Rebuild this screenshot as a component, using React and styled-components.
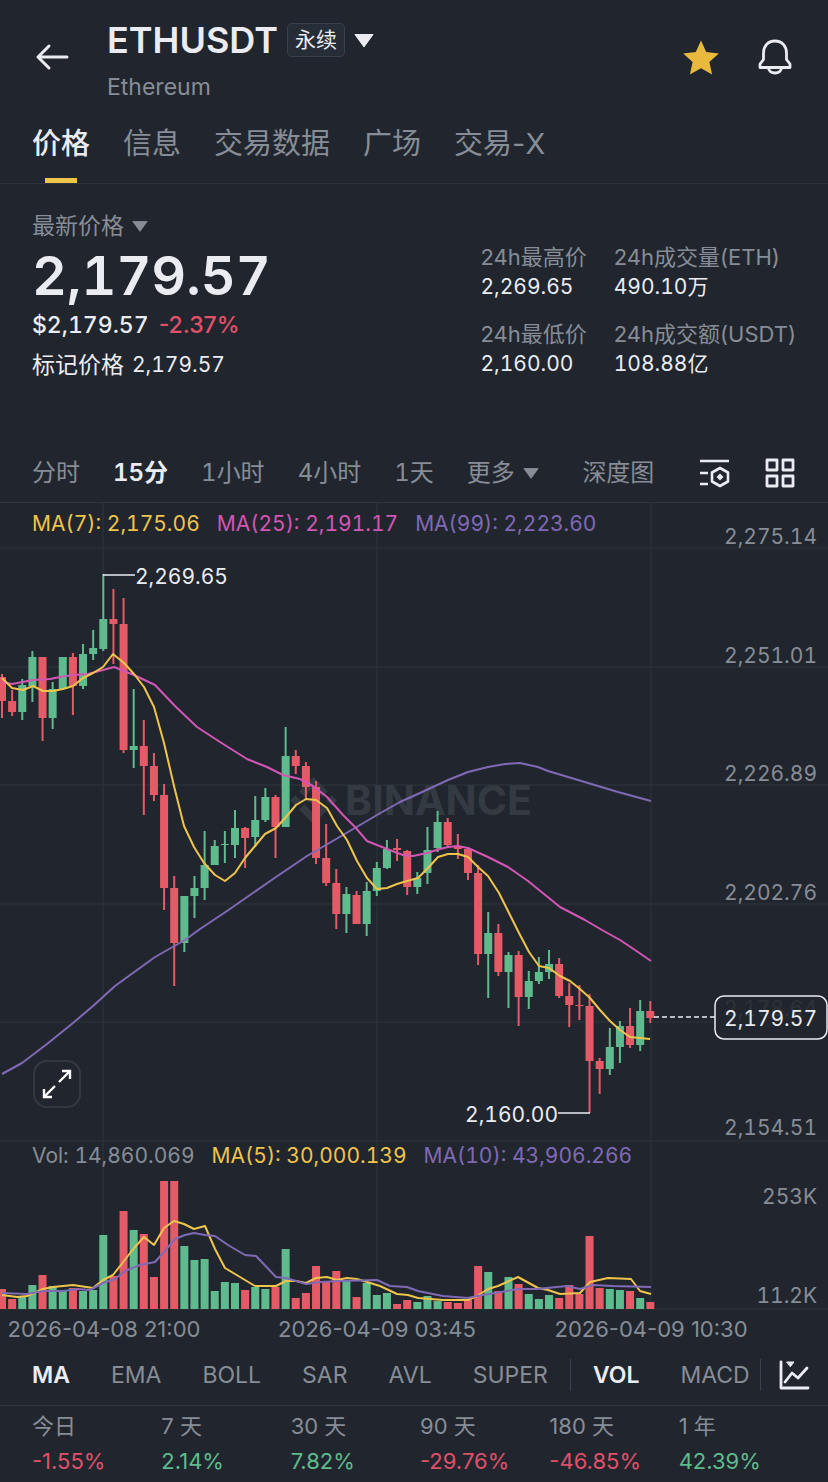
import React from "react";
import styled, { createGlobalStyle } from "styled-components";
import { SiBinance } from "react-icons/si";

const BG = "#21262e";
const WHITE = "#eaecf2";
const GRAY = "#878d96";
const LINE = "#2f353d";
const RED = "#e55a67";
const GREEN = "#5fbb8d";
const YELLOW = "#efc44b";
const PINK = "#d355b4";
const PURPLE = "#8069b5";

const tabs = ["价格", "信息", "交易数据", "广场", "交易-X"];
const periods = ["分时", "15分", "1小时", "4小时", "1天"];
const indicators = ["MA", "EMA", "BOLL", "SAR", "AVL", "SUPER"];
const subIndicators = ["VOL", "MACD"];

const stats = [
    { name: "24h最高价", value: "2,269.65" },
    { name: "24h成交量(ETH)", value: "490.10万" },
    { name: "24h最低价", value: "2,160.00" },
    { name: "24h成交额(USDT)", value: "108.88亿" },
];

const changes = [
    { name: "今日", value: "-1.55%" },
    { name: "7 天", value: "2.14%" },
    { name: "30 天", value: "7.82%" },
    { name: "90 天", value: "-29.76%" },
    { name: "180 天", value: "-46.85%" },
    { name: "1 年", value: "42.39%" },
];

const priceMa = [
    { text: "MA(7): 2,175.06", color: YELLOW },
    { text: "MA(25): 2,191.17", color: PINK },
    { text: "MA(99): 2,223.60", color: PURPLE },
];

const volumeMa = [
    { text: "Vol: 14,860.069", color: GRAY },
    { text: "MA(5): 30,000.139", color: YELLOW },
    { text: "MA(10): 43,906.266", color: PURPLE },
];

// [up, high, body top, body bottom, low, volume top] in chart coordinates
const candles = [
    [0, 674, 677, 701, 718, 1289], [0, 690, 701, 712, 716, 1299], [1, 679, 685, 712, 720, 1296],
    [1, 651, 657, 686, 702, 1285], [0, 657, 657, 718, 741, 1275], [1, 682, 689, 718, 729, 1286],
    [1, 657, 657, 689, 689, 1291], [0, 653, 657, 686, 715, 1288], [1, 644, 654, 686, 689, 1291],
    [1, 630, 648, 654, 660, 1290], [1, 574, 619, 649, 651, 1235], [0, 589, 619, 624, 664, 1276],
    [0, 598, 624, 750, 753, 1211], [1, 689, 746, 750, 768, 1230], [0, 720, 746, 766, 815, 1234],
    [0, 753, 766, 795, 801, 1277], [0, 784, 795, 888, 910, 1181], [0, 876, 888, 943, 986, 1181],
    [1, 896, 896, 943, 952, 1246], [1, 876, 888, 896, 918, 1260], [1, 831, 865, 888, 900, 1259],
    [1, 840, 846, 865, 865, 1291], [1, 831, 844, 845, 863, 1282], [1, 810, 828, 845, 858, 1283],
    [0, 827, 828, 838, 868, 1290], [1, 796, 820, 837, 847, 1287], [1, 788, 797, 820, 822, 1289],
    [0, 795, 797, 827, 858, 1287], [1, 727, 756, 827, 827, 1249], [0, 750, 756, 766, 774, 1298],
    [0, 762, 766, 787, 800, 1293], [0, 781, 787, 858, 864, 1266], [0, 824, 858, 883, 886, 1281],
    [0, 869, 883, 914, 929, 1271], [1, 887, 894, 914, 933, 1280], [0, 891, 895, 924, 924, 1297],
    [1, 882, 891, 924, 936, 1283], [1, 862, 868, 891, 896, 1295], [1, 840, 849, 868, 869, 1293],
    [0, 839, 848, 850, 861, 1304], [0, 850, 851, 887, 895, 1300], [1, 872, 878, 887, 894, 1302],
    [1, 827, 850, 873, 884, 1296], [1, 811, 822, 848, 852, 1301], [0, 818, 822, 845, 848, 1302],
    [0, 834, 847, 849, 859, 1303], [0, 847, 849, 873, 880, 1300], [0, 865, 873, 954, 965, 1266],
    [1, 912, 933, 954, 998, 1272], [0, 924, 933, 972, 976, 1291], [1, 952, 955, 972, 1008, 1277],
    [0, 951, 955, 997, 1026, 1284], [1, 971, 981, 997, 1009, 1294], [1, 957, 972, 981, 984, 1299],
    [1, 950, 964, 972, 979, 1295], [0, 958, 964, 996, 998, 1298], [0, 983, 996, 1005, 1027, 1285],
    [0, 985, 1005, 1006, 1020, 1294], [0, 994, 1006, 1061, 1113, 1236], [0, 1058, 1061, 1069, 1094, 1288],
    [1, 1028, 1047, 1069, 1075, 1289], [1, 1021, 1026, 1047, 1063, 1290], [0, 1008, 1026, 1045, 1048, 1291],
    [1, 1000, 1011, 1045, 1051, 1298], [0, 1001, 1011, 1018, 1023, 1302],
];

const ma7 = "2,678 12,688 23,690 33,686 43,691 53,691 63,689 73,686 83,678 93,673 103,667 113,654 124,663 134,674 144,687 154,707 164,743 174,786 184,826 194,847 204,863 215,875 225,881 235,873 245,858 255,846 265,834 276,828 286,817 296,805 306,799 316,800 327,808 337,826 347,840 357,861 367,878 377,889 387,888 397,884 407,881 418,878 428,868 438,857 448,854 458,854 468,857 478,867 488,876 499,893 509,913 519,933 529,952 539,966 549,968 560,976 570,981 580,989 590,998 600,1010 610,1021 620,1030 630,1037 640,1038 650,1039";
const ma25 = "2,682 12,684 33,680 50,679 60,677 73,675 88,674 103,670 114,667 124,671 134,675 155,685 175,706 197,727 220,742 247,759 267,767 283,775 300,779 313,786 327,797 343,815 355,827 367,841 387,849 403,855 413,856 427,853 440,849 448,847 458,846 468,848 488,857 508,867 518,874 528,881 560,907 585,920 602,930 620,940 635,950 651,961";
const ma99 = "2,1074 22,1063 47,1044 73,1023 93,1006 115,986 155,957 185,940 200,929 227,911 276,877 307,856 343,835 377,815 400,802 420,793 448,780 468,772 488,767 505,764 520,763 538,767 548,771 578,780 618,792 651,801";
const vol5 = "2,1295 17,1297 27,1296 43,1289 53,1287 73,1285 93,1288 103,1280 113,1275 124,1261 134,1248 144,1237 154,1245 164,1228 174,1221 184,1224 194,1229 205,1226 215,1249 225,1268 235,1274 255,1286 276,1286 286,1281 296,1281 306,1283 316,1278 327,1277 337,1280 347,1278 357,1279 367,1282 380,1286 397,1294 408,1295 418,1298 443,1300 468,1300 477,1296 488,1289 498,1286 518,1277 538,1288 548,1290 560,1294 580,1293 590,1282 608,1278 631,1279 640,1291 651,1294";
const vol10 = "2,1293 27,1294 43,1291 63,1291 78,1289 90,1290 103,1283 115,1279 125,1271 140,1265 155,1262 164,1252 175,1239 185,1235 194,1233 205,1235 215,1236 228,1245 245,1255 256,1256 276,1277 286,1278 306,1284 320,1282 340,1281 377,1280 390,1286 407,1287 418,1291 443,1296 468,1298 477,1296 495,1293 518,1289 537,1289 567,1286 580,1289 593,1285 613,1286 651,1287";

const columnX = [103, 377, 651];
const candleX = (i) => 2 + i * 10.13;

const Triangle = ({ size = 18, color = WHITE }) => (
    <svg width={size} height={size} viewBox="0 0 18 18" fill={color} stroke={color} strokeWidth="1" strokeLinejoin="round" aria-hidden="true">
        <path d="M1 4h16L9 15z" />
    </svg>
);

const PriceChart = () => (
    <Plot viewBox="0 503 828 637" role="img" aria-label="ETHUSDT 15分 K线">
        {[548, 667, 785, 904, 1022].map((y) => <GridLine key={y} x1="0" x2="828" y1={y} y2={y} />)}
        {columnX.map((x) => <GridLine key={x} x1={x} x2={x} y1="503" y2="1140" />)}
        <SiBinance x="290" y="777" size={47} color="#343a42" />
        <Watermark x="345" y="815">BINANCE</Watermark>
        {candles.map(([up, high, top, bottom, low], i) => (
            <g key={i} fill={up ? GREEN : RED}>
                <rect x={candleX(i) - 1} y={high} width="2" height={low - high} />
                <rect x={candleX(i) - 4} y={top} width="8" height={Math.max(bottom - top, 1)} />
            </g>
        ))}
        <Curve points={ma99} stroke={PURPLE} />
        <Curve points={ma25} stroke={PINK} />
        <Curve points={ma7} stroke={YELLOW} />
        <path d="M103 575H135M558 1113H590" stroke={WHITE} strokeWidth="1.5" />
        <Mark x="135" y="584">2,269.65</Mark>
        <Mark x="558" y="1122" textAnchor="end">2,160.00</Mark>
        <Scale x="817" y="544">2,275.14</Scale>
        <Scale x="817" y="663">2,251.01</Scale>
        <Scale x="817" y="781">2,226.89</Scale>
        <Scale x="817" y="900">2,202.76</Scale>
        <Scale x="817" y="1016">2,178.64</Scale>
        <Scale x="817" y="1135">2,154.51</Scale>
        <path d="M654 1017H715" stroke={WHITE} strokeWidth="1.5" strokeDasharray="5 3" />
        <rect x="715" y="996" width="112" height="43" rx="9" fill={BG} fillOpacity="0.88" stroke={WHITE} strokeWidth="1.5" />
        <Mark x="817" y="1026" textAnchor="end">2,179.57</Mark>
    </Plot>
);

const VolumeChart = () => (
    <Plot viewBox="0 1140 828 210" role="img" aria-label="成交量">
        <GridLine x1="0" x2="828" y1="1141" y2="1141" />
        <GridLine x1="0" x2="828" y1="1309" y2="1309" />
        {columnX.map((x) => <GridLine key={x} x1={x} x2={x} y1="1140" y2="1309" />)}
        {candles.map(([up, , , , , top], i) => (
            <rect key={i} x={candleX(i) - 4} y={top} width="8" height={1309 - top} fill={up ? GREEN : RED} />
        ))}
        <Curve points={vol5} stroke={YELLOW} />
        <Curve points={vol10} stroke={PURPLE} />
        <Scale x="817" y="1204">253K</Scale>
        <Scale x="817" y="1303">11.2K</Scale>
        <DateText x="104" y="1337">2026-04-08 21:00</DateText>
        <DateText x="377" y="1337">2026-04-09 03:45</DateText>
        <DateText x="651" y="1337">2026-04-09 10:30</DateText>
    </Plot>
);

const App = () => {
    const [tab, setTab] = React.useState("价格");
    const [period, setPeriod] = React.useState("15分");
    const [indicator, setIndicator] = React.useState("MA");
    const [sub, setSub] = React.useState("VOL");
    const [favorite, setFavorite] = React.useState(true);

    return (
        <>
            <GlobalStyle />
            <Header>
                <IconButton aria-label="返回">
                    <svg width="40" height="40" viewBox="0 0 40 40" fill="none" stroke={WHITE} strokeWidth="3" strokeLinecap="round" strokeLinejoin="round">
                        <path d="M35 19H6M17 8L6 19l11 11" />
                    </svg>
                </IconButton>
                <TitleBox>
                    <TitleRow>
                        <Title>ETHUSDT</Title>
                        <Badge>永续</Badge>
                        <IconButton aria-label="切换交易对"><Triangle size={20} /></IconButton>
                    </TitleRow>
                    <SubTitle>Ethereum</SubTitle>
                </TitleBox>
                <IconButton aria-label="收藏" onClick={() => setFavorite(!favorite)}>
                    <svg width="40" height="40" viewBox="0 0 40 40" fill={favorite ? "#e8b93c" : GRAY}>
                        <path d="M21 2.500l5.200 11.600 12.600 1.400-9.400 8.500 2.700 12.500L21 30.200 9.900 36.500l2.700-12.500L3.200 15.500l12.600-1.400z" />
                    </svg>
                </IconButton>
                <IconButton aria-label="提醒">
                    <svg width="40" height="40" viewBox="0 0 40 40" fill="none" stroke={WHITE} strokeWidth="2.800" strokeLinejoin="round">
                        <path d="M20 3C12.500 3 8.500 8.500 8.500 15v6.500L5 26v3.500h30V26l-3.500-4.500V15C31.500 8.500 27.500 3 20 3z" />
                        <path d="M13.500 29.500c0 3.500 3 5.500 6.500 5.500s6.500-2 6.500-5.500" />
                    </svg>
                </IconButton>
            </Header>

            <Tabs>
                {tabs.map((name) => (
                    <Tab key={name} $active={name === tab} onClick={() => setTab(name)}>{name}</Tab>
                ))}
            </Tabs>

            <Summary>
                <div>
                    <PriceType>最新价格 <Triangle size={16} color={GRAY} /></PriceType>
                    <Price>2,179.57</Price>
                    <Fiat>
                        <FiatValue>$2,179.57</FiatValue>
                        <Change $down>-2.37%</Change>
                    </Fiat>
                    <MarkPrice>标记价格 <StatValue>2,179.57</StatValue></MarkPrice>
                </div>
                <Stats>
                    {stats.map((s) => (
                        <Stat key={s.name}>
                            <StatName>{s.name}</StatName>
                            <StatValue>{s.value}</StatValue>
                        </Stat>
                    ))}
                </Stats>
            </Summary>

            <Periods>
                <Group $gap={33}>
                    {periods.map((name) => (
                        <Option key={name} $active={name === period} onClick={() => setPeriod(name)}>{name}</Option>
                    ))}
                    <Option>更多 <Triangle size={16} color={GRAY} /></Option>
                </Group>
                <Option>深度图</Option>
                <Group $gap={34}>
                    <IconButton aria-label="图表设置">
                        <svg width="32" height="32" viewBox="0 0 32 32" fill="none" stroke={WHITE} strokeWidth="2.600" strokeLinejoin="round">
                            <path d="M2 4h29M2 16h8M2 27h8" />
                            <path d="M22 11l8 4.500v9L22 29l-8-4.500v-9z" />
                            <path d="M22 16.500l3.500 3.500-3.500 3.500-3.500-3.500z" fill={WHITE} stroke="none" />
                        </svg>
                    </IconButton>
                    <IconButton aria-label="布局">
                        <svg width="32" height="32" viewBox="0 0 32 32" fill="none" stroke={WHITE} strokeWidth="2.800" strokeLinejoin="round">
                            <path d="M3 3h10v10H3zM19 3h10v10H19zM3 19h10v10H3zM19 19h10v10H19z" />
                        </svg>
                    </IconButton>
                </Group>
            </Periods>

            <Pane>
                <PriceChart />
                <Legend $top={6}>
                    {priceMa.map((m) => <LegendItem key={m.text} $color={m.color}>{m.text}</LegendItem>)}
                </Legend>
                <Expand aria-label="全屏">
                    <svg width="32" height="32" viewBox="0 0 32 32" fill="none" stroke="#fff" strokeWidth="2.400">
                        <path d="M18 14L29 3M21 3h8v8M14 18L3 29M3 21v8h8" />
                    </svg>
                </Expand>
            </Pane>
            <Pane>
                <VolumeChart />
                <Legend $top={1}>
                    {volumeMa.map((m) => <LegendItem key={m.text} $color={m.color}>{m.text}</LegendItem>)}
                </Legend>
            </Pane>

            <Indicators>
                <Group $gap={22}>
                    <Group $gap={41}>
                        {indicators.map((name) => (
                            <Option key={name} $active={name === indicator} onClick={() => setIndicator(name)}>{name}</Option>
                        ))}
                    </Group>
                    <Divider />
                    <Group $gap={41}>
                        {subIndicators.map((name) => (
                            <Option key={name} $active={name === sub} onClick={() => setSub(name)}>{name}</Option>
                        ))}
                    </Group>
                </Group>
                <Group $gap={17}>
                    <Divider />
                    <IconButton aria-label="指标设置">
                        <svg width="32" height="32" viewBox="0 0 32 32" fill="none" stroke={WHITE} strokeWidth="2.800" strokeLinecap="round" strokeLinejoin="round">
                            <path d="M3 3v26h27" />
                            <path d="M7 23l7-9 6 5 9-10" />
                            <path d="M9 3h7l-3.500 4.500z" fill={WHITE} strokeWidth="1" />
                        </svg>
                    </IconButton>
                </Group>
            </Indicators>

            <Changes>
                {changes.map((c) => (
                    <ChangeItem key={c.name}>
                        <StatName>{c.name}</StatName>
                        <Change $down={c.value[0] === "-"}>{c.value}</Change>
                    </ChangeItem>
                ))}
            </Changes>
        </>
    )
}

const GlobalStyle = createGlobalStyle`
* { box-sizing: border-box; }
body {
margin: 0;
background: ${BG};
color: ${WHITE};
font-family: Inter, "Noto Sans CJK SC", sans-serif;
font-size: 22px;
line-height: 30px;
}
button {
border: 0;
padding: 0;
background: none;
color: inherit;
font: inherit;
cursor: pointer;
white-space: nowrap;
}
svg { display: block; }
`;

const Header = styled.header`
display: flex;
align-items: center;
gap: 35px;
padding: 16px 33px 8px 32px;
`;

const IconButton = styled.button`
display: flex;
flex: none;
`;

const TitleBox = styled.div`
flex: 1;
`;

const TitleRow = styled.div`
display: flex;
align-items: center;
gap: 9px;
height: 48px;
`;

const Title = styled.h1`
margin: 0;
font-size: 36px;
font-weight: 600;
`;

const Badge = styled.span`
padding: 1px 7px;
border: 1px solid #3a414b;
border-radius: 5px;
background: #272d36;
font-size: 21px;
`;

const SubTitle = styled.div`
margin-top: 10px;
font-size: 23px;
line-height: 26px;
color: ${GRAY};
`;

const Tabs = styled.nav`
display: flex;
gap: 33px;
height: 76px;
padding: 0 32px;
border-bottom: 1px solid ${LINE};
`;

const Tab = styled.button`
position: relative;
padding-bottom: 4px;
font-size: 29px;
font-weight: ${(props) => (props.$active ? 500 : 400)};
color: ${(props) => (props.$active ? WHITE : GRAY)};
&::after {
content: "";
position: absolute;
left: 50%;
bottom: 0;
width: 32px;
height: 5px;
margin-left: -16px;
background: ${(props) => (props.$active ? YELLOW : "transparent")};
}
`;

const Summary = styled.section`
display: flex;
justify-content: space-between;
padding: 27px 32px 61px;
`;

const PriceType = styled.button`
display: flex;
align-items: center;
gap: 8px;
font-size: 23px;
color: ${GRAY};
`;

const Price = styled.div`
font-size: 54px;
font-weight: 600;
font-variant-numeric: tabular-nums;
line-height: 69px;
`;

const Fiat = styled.div`
display: flex;
gap: 10px;
font-size: 23px;
font-weight: 500;
`;

const FiatValue = styled.span`
font-variant-numeric: tabular-nums;
`;

const Change = styled.span`
color: ${(props) => (props.$down ? "#e0506a" : GREEN)};
`;

const MarkPrice = styled.div`
display: flex;
gap: 8px;
margin-top: 10px;
font-size: 23px;
`;

const Stats = styled.div`
display: grid;
grid-template-columns: auto auto;
gap: 17px 27px;
align-content: start;
padding-top: 31px;
`;

const Stat = styled.div`
display: flex;
flex-direction: column;
`;

const StatName = styled.span`
color: ${GRAY};
white-space: nowrap;
`;

const StatValue = styled.span`
font-size: 21px;
font-variant-numeric: tabular-nums;
`;

const Periods = styled.nav`
display: flex;
align-items: center;
justify-content: space-between;
height: 62px;
padding: 2px 32px 0;
border-bottom: 1px solid ${LINE};
font-size: 24px;
font-variant-numeric: tabular-nums;
`;

const Group = styled.div`
display: flex;
align-items: center;
gap: ${(props) => props.$gap}px;
`;

const Option = styled.button`
display: flex;
align-items: center;
gap: 8px;
font-weight: ${(props) => (props.$active ? 600 : 400)};
font-variant-numeric: inherit;
color: ${(props) => (props.$active ? WHITE : GRAY)};
`;

const Pane = styled.section`
position: relative;
`;

const Plot = styled.svg`
width: 100%;
height: auto;
`;

const GridLine = styled.line`
stroke: ${LINE};
stroke-width: 1;
`;

const Curve = styled.polyline`
fill: none;
stroke-width: 2;
stroke-linejoin: round;
`;

const Watermark = styled.text`
font-size: 41px;
font-weight: 700;
fill: #343a42;
`;

const Mark = styled.text`
font-size: 21px;
font-variant-numeric: tabular-nums;
fill: ${WHITE};
`;

const Scale = styled.text`
font-size: 21px;
font-variant-numeric: tabular-nums;
fill: ${GRAY};
text-anchor: end;
`;

const DateText = styled.text`
font-size: 22px;
fill: ${GRAY};
text-anchor: middle;
`;

const Legend = styled.div`
position: absolute;
top: ${(props) => props.$top}px;
left: 32px;
display: flex;
gap: 17px;
font-size: 21px;
font-variant-numeric: tabular-nums;
`;

const LegendItem = styled.span`
color: ${(props) => props.$color};
`;

const Expand = styled.button`
position: absolute;
left: 33px;
bottom: 32px;
display: flex;
align-items: center;
justify-content: center;
width: 48px;
height: 48px;
border: 2px solid #333941;
border-radius: 14px;
`;

const Indicators = styled.nav`
display: flex;
align-items: center;
justify-content: space-between;
height: 56px;
padding: 0 18px 6px 32px;
border-bottom: 1px solid ${LINE};
font-size: 23px;
`;

const Divider = styled.span`
flex: none;
width: 1px;
height: 32px;
background: #3a414b;
`;

const Changes = styled.section`
display: grid;
grid-template-columns: repeat(6, 1fr);
padding: 5px 20px 4px 32px;
`;

const ChangeItem = styled.div`
display: flex;
flex-direction: column;
gap: 5px;
`;

export default App;
